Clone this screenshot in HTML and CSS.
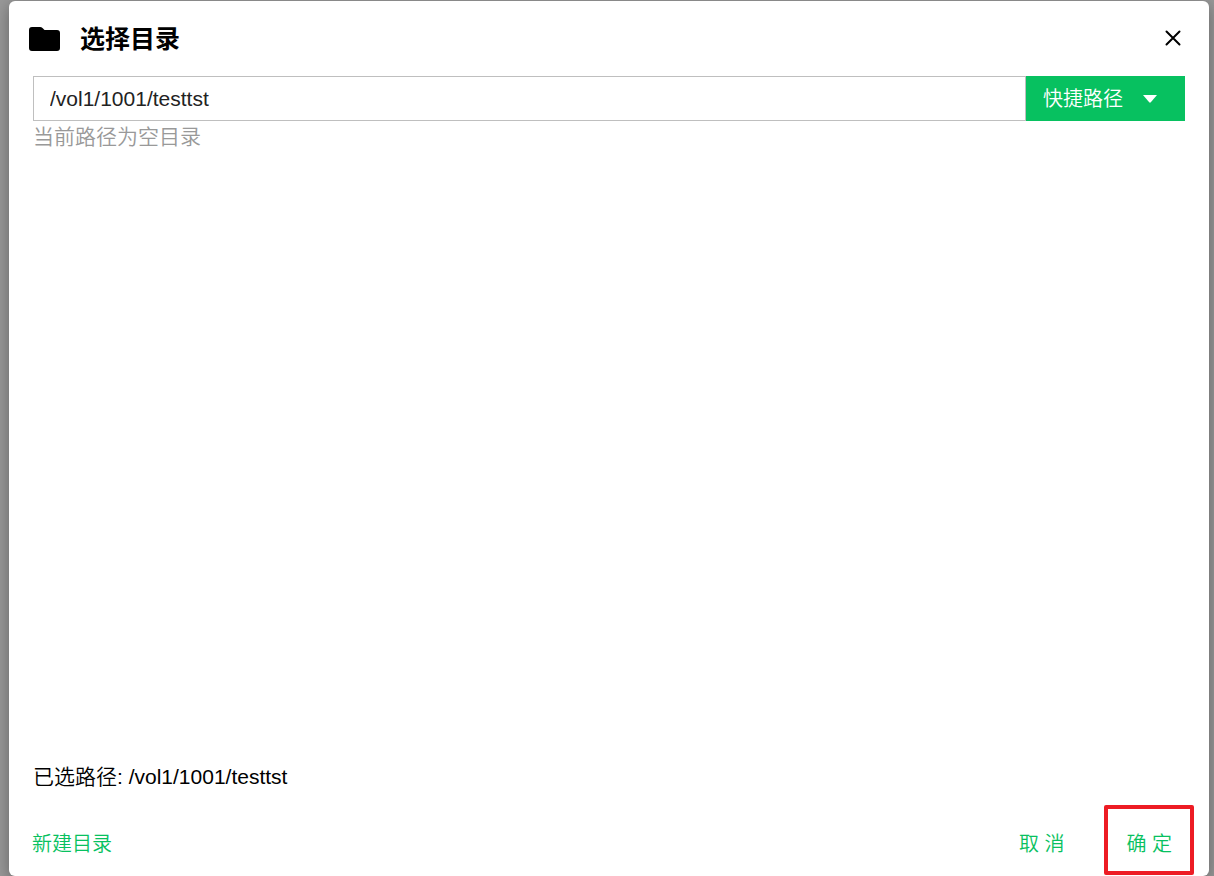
FILE: index.html
```html
<!DOCTYPE html>
<html lang="zh-CN">
<head>
<meta charset="utf-8">
<meta name="viewport" content="width=device-width, initial-scale=1">
<title>选择目录</title>
<link rel="stylesheet" href="styles.css">
</head>
<body>
<main class="dialog" role="dialog" aria-labelledby="dialog-title">
  <header class="dialog-header">
    <svg class="folder-icon" viewBox="0 0 31 24" aria-hidden="true"><path d="M3 0H11Q12.500 0 13.500 1L15.500 3H28Q31 3 31 6V21Q31 24 28 24H3Q0 24 0 21V3Q0 0 3 0Z"/></svg>
    <h1 class="dialog-title" id="dialog-title">选择目录</h1>
    <button class="close-button" type="button" aria-label="关闭">
      <svg class="close-icon" viewBox="0 0 16 16" aria-hidden="true"><path d="M1.500 1.500L14.500 14.500M14.500 1.500L1.500 14.500"/></svg>
    </button>
  </header>
  <section class="dialog-body">
    <div class="path-row">
      <input class="path-input" type="text" aria-label="路径" value="/vol1/1001/testtst">
      <button class="quick-button" type="button">快捷路径
        <svg class="caret-icon" viewBox="0 0 14 8" aria-hidden="true"><path d="M0 0H14L7.800 7.300Q7 8 6.200 7.300Z"/></svg>
      </button>
    </div>
    <p class="empty-hint">当前路径为空目录</p>
  </section>
  <p class="selected-path">已选路径: /vol1/1001/testtst</p>
  <footer class="dialog-footer">
    <button class="text-button" type="button">新建目录</button>
    <div class="footer-actions">
      <button class="text-button" type="button">取 消</button>
      <div class="highlight"><button class="text-button" type="button">确 定</button></div>
    </div>
  </footer>
</main>
</body>
</html>
```
FILE: styles.css
```css
* {
  box-sizing: border-box;
}

body {
  display: flex;
  min-height: 100vh;
  margin: 0;
  padding: 1px 5px 0 9px;
  background: #989898;
  color: #000;
  font-family: "Liberation Sans", "Noto Sans CJK SC", sans-serif;
  font-size: 21px;
  font-weight: 350;
  line-height: 32px;
}

button {
  border: 0;
  background: none;
  font: inherit;
  font-size: 20px;
  cursor: pointer;
}

p {
  margin: 0;
}

.dialog {
  display: flex;
  flex: 1;
  flex-direction: column;
  border-radius: 6px;
  background: #fff;
  box-shadow: 0 4px 16px rgba(0, 0, 0, 0.35);
}

.dialog-header {
  display: flex;
  align-items: center;
  height: 75px;
  padding: 0 28px 0 20px;
}

.folder-icon {
  width: 31px;
  height: 24px;
}

.dialog-title {
  flex: 1;
  margin: 0 0 0 20px;
  font-size: 25px;
  font-weight: 700;
}

.close-button {
  display: flex;
  padding: 0 0 2px;
}

.close-icon {
  width: 16px;
  height: 16px;
  fill: none;
  stroke: #000;
  stroke-width: 2;
  stroke-linecap: round;
}

.dialog-body {
  flex: 1;
  padding: 0 24px;
}

.path-row {
  display: flex;
  height: 45px;
}

.path-input {
  flex: 1;
  min-width: 0;
  padding: 0 16px;
  border: 1px solid #bfbfbf;
  border-radius: 0;
  color: #222;
  font: inherit;
}

.quick-button {
  display: flex;
  flex: none;
  align-items: center;
  gap: 20px;
  padding: 0 28px 0 17px;
  background: #07c160;
  color: #fff;
}

.caret-icon {
  width: 14px;
  height: 8px;
  fill: currentColor;
}

.empty-hint {
  color: #999;
}

.selected-path {
  padding: 0 24px;
}

.dialog-footer {
  display: flex;
  align-items: baseline;
  justify-content: space-between;
  padding: 12px 15px 1px 23px;
}

.footer-actions {
  display: flex;
  align-items: baseline;
  gap: 40px;
}

.text-button {
  padding: 0;
  color: #07c160;
}

.highlight {
  display: flex;
  padding: 19px 18px 11px;
  border: 4px solid #ed1c24;
  border-radius: 2px;
}
```
